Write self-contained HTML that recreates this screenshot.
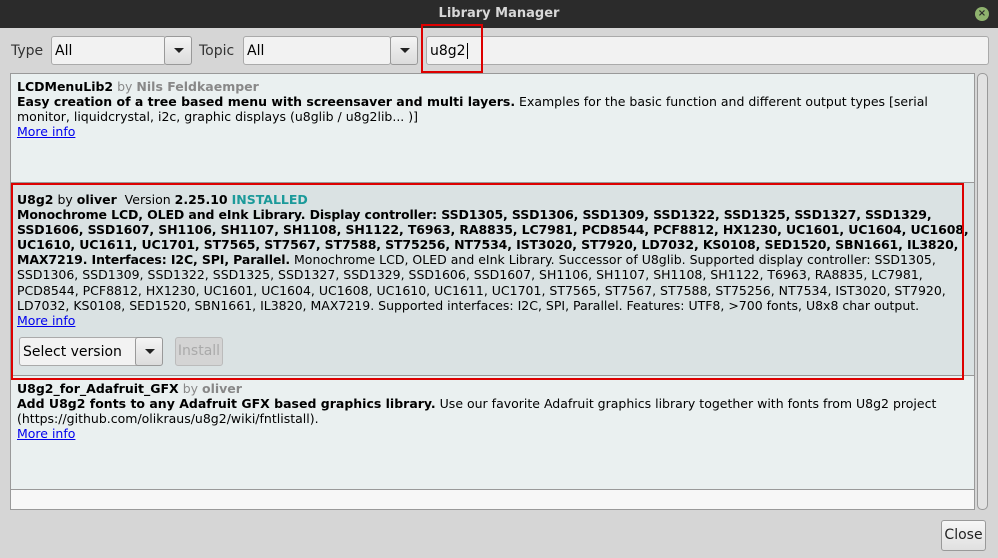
<!DOCTYPE html>
<html><head><meta charset="utf-8"><style>
*{margin:0;padding:0;box-sizing:border-box}
body{width:998px;height:558px;background:#d6d6d6;font-family:"DejaVu Sans","Liberation Sans",sans-serif;font-size:12.5px;color:#000;position:relative;overflow:hidden}
.title{position:absolute;left:0;top:0;width:998px;height:28px;background:#2b2b2b;color:#d8d8d8;font-weight:bold;font-size:13px;text-align:center;line-height:28px}
.xbtn{position:absolute;left:975px;top:7px;width:14px;height:14px;border-radius:50%;background:#8fb26e;color:#2b2b2b;font-size:10px;line-height:14px;text-align:center;font-weight:bold}
.lbl{position:absolute;top:43px;font-size:14px;color:#333}
.combo{position:absolute;top:36px;height:29px;background:#f2f2f2;border:1px solid #aaa;border-radius:3px;font-size:14px;line-height:29px;padding-left:3px}
.arr{position:absolute;top:36px;width:28px;height:29px;background:linear-gradient(#f4f4f4,#dcdcdc);border:1px solid #999;border-radius:3px}
.arr:after{content:"";position:absolute;left:9px;top:11px;border-left:5px solid transparent;border-right:5px solid transparent;border-top:5px solid #222}
.list{position:absolute;left:10px;top:73px;width:965px;height:437px;background:#f7f7f7;border:1px solid #999;overflow:hidden}
.item{position:absolute;left:0;width:963px;padding:5px 6px;line-height:15.1px;white-space:nowrap;border-bottom:1px solid #999}
.bb{letter-spacing:-0.12px}
a{color:#00e;text-decoration:underline}
.g{color:#888}
.inst{color:#1b9a9a;font-weight:bold}
.sb{position:absolute;left:977px;top:73px;width:11px;height:437px;background:#e2e2e2;border:1px solid #999;border-radius:5px}
</style></head><body>
<div class="title">Library Manager</div>
<div class="xbtn">×</div>
<div class="lbl" style="left:11px">Type</div>
<div class="combo" style="left:51px;width:115px">All</div>
<div class="arr" style="left:164px"></div>
<div class="lbl" style="left:199px">Topic</div>
<div class="combo" style="left:243px;width:148px">All</div>
<div class="arr" style="left:390px"></div>
<div class="combo" style="left:426px;width:563px">u8g2<span style="border-left:1px solid #000;margin-left:1px"></span></div>
<div style="position:absolute;left:421px;top:24px;width:62px;height:49px;border:2px solid #d00"></div>
<div class="list">
<div class="item" style="top:0;height:109px;background:#eaf0f0"><b>LCDMenuLib2</b> <span class="g">by <b>Nils Feldkaemper</b></span><br><b>Easy creation of a tree based menu with screensaver and multi layers.</b> Examples for the basic function and different output types [serial<br>monitor, liquidcrystal, i2c, graphic displays (u8glib / u8g2lib... )]<br><a>More info</a></div>
<div class="item" style="top:109px;height:193px;background:#dae2e3;padding-top:9px"><b>U8g2</b> by <b>oliver</b>&nbsp; Version <b>2.25.10</b> <span class="inst">INSTALLED</span><br><b class="bb">Monochrome LCD, OLED and eInk Library. Display controller: SSD1305, SSD1306, SSD1309, SSD1322, SSD1325, SSD1327, SSD1329,<br>SSD1606, SSD1607, SH1106, SH1107, SH1108, SH1122, T6963, RA8835, LC7981, PCD8544, PCF8812, HX1230, UC1601, UC1604, UC1608,<br>UC1610, UC1611, UC1701, ST7565, ST7567, ST7588, ST75256, NT7534, IST3020, ST7920, LD7032, KS0108, SED1520, SBN1661, IL3820,<br>MAX7219. Interfaces: I2C, SPI, Parallel.</b> Monochrome LCD, OLED and eInk Library. Successor of U8glib. Supported display controller: SSD1305,<br>SSD1306, SSD1309, SSD1322, SSD1325, SSD1327, SSD1329, SSD1606, SSD1607, SH1106, SH1107, SH1108, SH1122, T6963, RA8835, LC7981,<br>PCD8544, PCF8812, HX1230, UC1601, UC1604, UC1608, UC1610, UC1611, UC1701, ST7565, ST7567, ST7588, ST75256, NT7534, IST3020, ST7920,<br>LD7032, KS0108, SED1520, SBN1661, IL3820, MAX7219. Supported interfaces: I2C, SPI, Parallel. Features: UTF8, &gt;700 fonts, U8x8 char output.<br><a>More info</a>
<div style="position:absolute;left:8px;top:154px;width:129px;height:29px;background:#f2f2f2;border:1px solid #aaa;border-radius:3px;font-size:14px;line-height:29px;padding-left:3px">Select version</div>
<div class="arr" style="left:124px;top:154px"></div>
<div style="position:absolute;left:164px;top:154px;width:48px;height:29px;background:#d4d4d4;border:1px solid #bbb;border-radius:3px;font-size:14px;line-height:27px;text-align:center;color:#aaa">Install</div>
</div>
<div class="item" style="top:302px;height:114px;background:#eaf0f0"><b>U8g2_for_Adafruit_GFX</b> <span class="g">by <b>oliver</b></span><br><b>Add U8g2 fonts to any Adafruit GFX based graphics library.</b> Use our favorite Adafruit graphics library together with fonts from U8g2 project<br>(https://github.com/olikraus/u8g2/wiki/fntlistall).<br><a>More info</a></div>
</div>
<div class="sb"></div>
<div style="position:absolute;left:11px;top:183px;width:953px;height:197px;border:2px solid #d00"></div>
<div style="position:absolute;left:941px;top:520px;width:45px;height:31px;background:linear-gradient(#f6f6f6,#e0e0e0);border:1px solid #999;border-radius:3px;font-size:14px;line-height:29px;text-align:center;color:#222">Close</div>
</body></html>
